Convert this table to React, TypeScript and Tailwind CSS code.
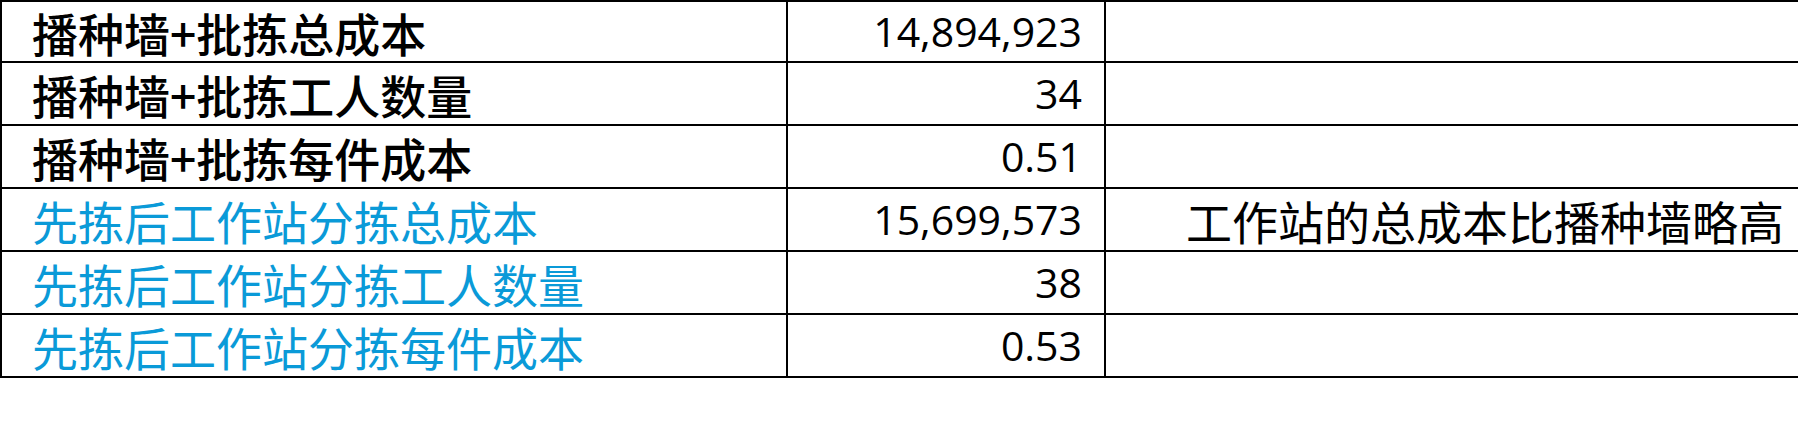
import React from "react";

type Row = { label: string; value: string; note?: string; blue?: boolean };

const rows: Row[] = [
  { label: "播种墙+批拣总成本", value: "14,894,923" },
  { label: "播种墙+批拣工人数量", value: "34" },
  { label: "播种墙+批拣每件成本", value: "0.51" },
  { label: "先拣后工作站分拣总成本", value: "15,699,573", note: "工作站的总成本比播种墙略高", blue: true },
  { label: "先拣后工作站分拣工人数量", value: "38", blue: true },
  { label: "先拣后工作站分拣每件成本", value: "0.53", blue: true },
];

const cjk = "font-['Noto_Sans_CJK_SC',sans-serif]";

export default function App() {
  return (
    <div className="h-[439px] w-[1798px] overflow-hidden bg-white">
      <div className="w-[1800px] border-t-2 border-l-2 border-black">
        {rows.map((r, i) => (
          <div
            key={r.label}
            className={`flex border-b-2 border-black ${i === 0 ? "h-[61px]" : "h-[63px]"}`}
          >
            <div
              className={`flex w-[786px] items-center border-r-2 border-black pl-[30px] text-[46px] leading-none ${cjk} ${
                r.blue ? "text-[#0a9ad8]" : "font-medium text-black"
              }`}
            >
              {r.label}
            </div>
            <div className="flex w-[318px] items-center justify-end border-r-2 border-black pr-[22px] font-['Open_Sans',sans-serif] text-[41px] font-medium leading-none text-black">
              {r.value}
            </div>
            <div className={`flex flex-1 items-center pl-[80px] text-[46px] leading-none text-black ${cjk}`}>
              {r.note}
            </div>
          </div>
        ))}
      </div>
    </div>
  );
}
